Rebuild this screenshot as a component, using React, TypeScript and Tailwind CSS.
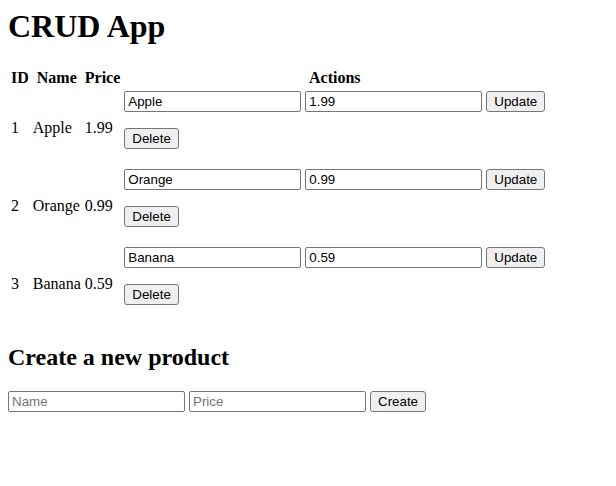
import { useState } from 'react';

interface Product {
  id: number;
  name: string;
  price: string;
}

const initialProducts: Product[] = [
  { id: 1, name: 'Apple', price: '1.99' },
  { id: 2, name: 'Orange', price: '0.99' },
  { id: 3, name: 'Banana', price: '0.59' },
];

const inputCls =
  "w-[177px] h-[21px] px-[3px] border border-[#767676] rounded-[2px] bg-white text-black text-[13.333px] leading-[normal] font-['Liberation_Sans',Arial,sans-serif] placeholder:text-[#757575] outline-none";

const buttonCls =
  "h-[21px] px-[7px] border border-[#767676] rounded-[3px] bg-[#efefef] text-black text-[13.333px] leading-[normal] font-['Liberation_Sans',Arial,sans-serif] cursor-default";

export default function App() {
  const [products, setProducts] = useState(initialProducts);
  const [newName, setNewName] = useState('');
  const [newPrice, setNewPrice] = useState('');

  const edit = (id: number, field: 'name' | 'price', value: string) =>
    setProducts((list) => list.map((p) => (p.id === id ? { ...p, [field]: value } : p)));

  return (
    <div className="min-h-screen bg-white px-2 pt-2 text-black text-[16px] leading-[normal] font-['Liberation_Serif','Times_New_Roman',serif]">
      <h1 className="text-[32px] font-bold leading-[normal] mb-[21.44px]">CRUD App</h1>

      <table className="border-separate border-spacing-[2px]">
        <thead>
          <tr>
            <th className="p-px font-bold text-center align-middle">ID</th>
            <th className="p-px font-bold text-center align-middle">Name</th>
            <th className="p-px font-bold text-center align-middle">Price</th>
            <th className="p-px font-bold text-center align-middle">Actions</th>
          </tr>
        </thead>
        <tbody>
          {products.map((product) => (
            <tr key={product.id}>
              <td className="p-px align-middle">{product.id}</td>
              <td className="p-px align-middle">{product.name}</td>
              <td className="p-px align-middle">{product.price}</td>
              <td className="p-px align-middle">
                <div className="flex items-start gap-[4px] h-[21px] mb-4">
                  <input
                    className={inputCls}
                    value={product.name}
                    onChange={(e) => edit(product.id, 'name', e.target.value)}
                  />
                  <input
                    className={inputCls}
                    value={product.price}
                    onChange={(e) => edit(product.id, 'price', e.target.value)}
                  />
                  <button className={buttonCls}>Update</button>
                </div>
                <div className="flex items-start h-[21px] mb-4">
                  <button
                    className={buttonCls}
                    onClick={() => setProducts((list) => list.filter((p) => p.id !== product.id))}
                  >
                    Delete
                  </button>
                </div>
              </td>
            </tr>
          ))}
        </tbody>
      </table>

      <h2 className="text-[24px] font-bold leading-[normal] mt-[20px] mb-[20px]">Create a new product</h2>
      <div className="flex items-start gap-[4px]">
        <input
          className={inputCls}
          placeholder="Name"
          value={newName}
          onChange={(e) => setNewName(e.target.value)}
        />
        <input
          className={inputCls}
          placeholder="Price"
          value={newPrice}
          onChange={(e) => setNewPrice(e.target.value)}
        />
        <button
          className={buttonCls}
          onClick={() => {
            if (!newName) return;
            setProducts((list) => [
              ...list,
              { id: list.length ? list[list.length - 1].id + 1 : 1, name: newName, price: newPrice },
            ]);
            setNewName('');
            setNewPrice('');
          }}
        >
          Create
        </button>
      </div>
    </div>
  );
}
